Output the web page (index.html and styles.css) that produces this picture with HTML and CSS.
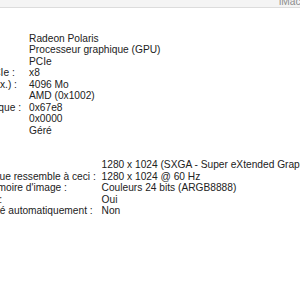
FILE: index.html
```html
<!DOCTYPE html>
<html lang="fr">
<head>
<meta charset="utf-8">
<link rel="stylesheet" href="styles.css">
</head>
<body>
<div class="pathbar"><span class="path">iMac de Jean</span></div>
<div class="pane">
  <div class="props level1">
    <span class="label">Jeu de composants :</span><span class="value">Radeon Polaris</span>
    <span class="label">Type :</span><span class="value">Processeur graphique (GPU)</span>
    <span class="label">Bus :</span><span class="value">PCIe</span>
    <span class="label">Largeur de liaisons PCIe :</span><span class="value">x8</span>
    <span class="label">VRAM (dynamique max.) :</span><span class="value">4096 Mo</span>
    <span class="label">Fournisseur :</span><span class="value">AMD (0x1002)</span>
    <span class="label">Identifiant du périphérique :</span><span class="value">0x67e8</span>
    <span class="label">ID de révision :</span><span class="value">0x0000</span>
    <span class="label">Metal :</span><span class="value">Géré</span>
  </div>
  <div class="props level3">
    <span class="label">Résolution :</span><span class="value">1280 x 1024 (SXGA - Super eXtended Graphics Array)</span>
    <span class="label">L'interface graphique ressemble à ceci :</span><span class="value">1280 x 1024 @ 60 Hz</span>
    <span class="label">Profondeur de mémoire d'image :</span><span class="value">Couleurs 24 bits (ARGB8888)</span>
    <span class="label">Moniteur principal :</span><span class="value">Oui</span>
    <span class="label">Régler la luminosité automatiquement :</span><span class="value">Non</span>
  </div>
</div>
</body>
</html>
```

FILE: styles.css
```css
html, body {
  margin: 0;
  padding: 0;
  background: #ffffff;
  overflow: hidden;
}

body {
  width: 300px;
  height: 300px;
  font-family: "Liberation Sans", Arial, sans-serif;
  font-size: 10.2px;
  color: #222222;
}

.pathbar {
  height: 7px;
  background: #f4f4f4;
  border-bottom: 1px solid #dcdcdc;
  display: flex;
  align-items: flex-end;
  overflow: hidden;
  padding-left: 279px;
  white-space: nowrap;
}

.path {
  line-height: 10px;
  color: #8c8c8c;
}

.pane {
  padding-top: 24.7px;
  margin-left: -102.5px;
}

.props {
  display: grid;
  grid-template-columns: max-content max-content;
  column-gap: 8.1px;
  line-height: 11.5px;
  white-space: nowrap;
}

.level3 {
  margin-top: 23px;
  padding-left: 18.5px;
  column-gap: 5.8px;
}
```
